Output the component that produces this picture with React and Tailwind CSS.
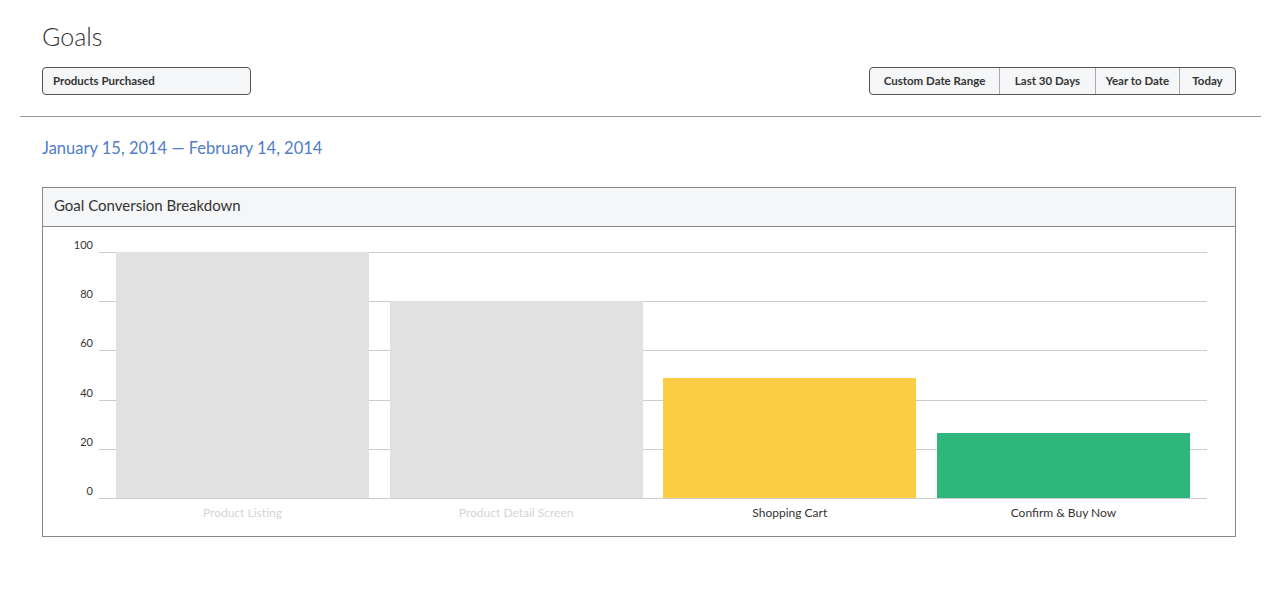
const ranges = ['Custom Date Range', 'Last 30 Days', 'Year to Date', 'Today'];
const rangeWidths = ['w-[129px]', 'w-[96px]', 'w-[84px]', 'w-[56px]'];

const ticks = [100, 80, 60, 40, 20, 0];

const bars = [
  { label: 'Product Listing', value: 100, color: 'bg-[#e0e1e0]', text: 'text-[#d4d5d5]' },
  { label: 'Product Detail Screen', value: 80, color: 'bg-[#e0e1e0]', text: 'text-[#d4d5d5]' },
  { label: 'Shopping Cart', value: 48.8, color: 'bg-[#facd44]', text: 'text-[#333]' },
  { label: 'Confirm & Buy Now', value: 26.4, color: 'bg-[#2fb67b]', text: 'text-[#333]' },
];

const PLOT_H = 246;

function App() {
  return (
    <div className="min-h-screen bg-white pl-[20px] pr-[19px] text-[#333]" style={{ fontFamily: 'Lato, "Open Sans", sans-serif' }}>
      {/* Header */}
      <div className="pl-[22px] pr-[25px] pt-[22px]">
        <h1 className="text-[25px] leading-[29px] font-light text-[#333]">Goals</h1>
        <div className="mt-[16px] flex justify-between">
          <button className="h-[28px] w-[209px] rounded-[4px] border border-[#555] bg-[#f5f6f7] px-[10px] text-left text-[11.5px] font-bold">
            Products Purchased
          </button>
          <div className="flex h-[28px] overflow-hidden rounded-[4px] border border-[#555] bg-[#f5f6f7]">
            {ranges.map((r, i) => (
              <button
                key={r}
                className={`${rangeWidths[i]} text-[11.5px] font-bold ${i > 0 ? 'border-l border-[#aaa]' : ''}`}
              >
                {r}
              </button>
            ))}
          </div>
        </div>
      </div>

      <div className="mt-[21px] h-px bg-[#999]" />

      <div className="pl-[22px] pr-[25px]">
        <div className="mt-[20px] text-[16.5px] leading-[22px] text-[#4f7dc6]">
          January 15, 2014 — February 14, 2014
        </div>

        {/* Card */}
        <div className="mt-[28px] border border-[#888]">
          <div className="flex h-[39px] items-center border-b border-[#888] bg-[#f5f6f7] px-[11px] pb-[4px] text-[15px]">
            Goal Conversion Breakdown
          </div>
          <div className="flex h-[309px] pt-[25px]">
            {/* Y axis */}
            <div className="relative w-[50px]" style={{ height: PLOT_H }}>
              {ticks.map((t) => (
                <div
                  key={t}
                  className="absolute right-0 -translate-y-1/2 text-[11px] leading-[14px] text-[#333]"
                  style={{ top: ((100 - t) / 100) * PLOT_H - 7 }}
                >
                  {t}
                </div>
              ))}
            </div>
            <div className="ml-[6px] w-[1108px]">
              <div className="relative" style={{ height: PLOT_H }}>
                {ticks.map((t) => (
                  <div
                    key={t}
                    className="absolute left-0 right-0 h-px bg-[#ccc]"
                    style={{ top: ((100 - t) / 100) * PLOT_H }}
                  />
                ))}
                <div className="relative flex h-full items-end justify-between px-[17px]">
                  {bars.map((b) => (
                    <div
                      key={b.label}
                      className={`w-[253px] ${b.color}`}
                      style={{ height: Math.round((b.value / 100) * PLOT_H) }}
                    />
                  ))}
                </div>
              </div>
              <div className="mt-[8px] flex justify-between px-[17px]">
                {bars.map((b) => (
                  <div key={b.label} className={`w-[253px] text-center text-[12px] leading-[14px] ${b.text}`}>
                    {b.label}
                  </div>
                ))}
              </div>
            </div>
          </div>
        </div>
      </div>
    </div>
  );
}

export default App;
